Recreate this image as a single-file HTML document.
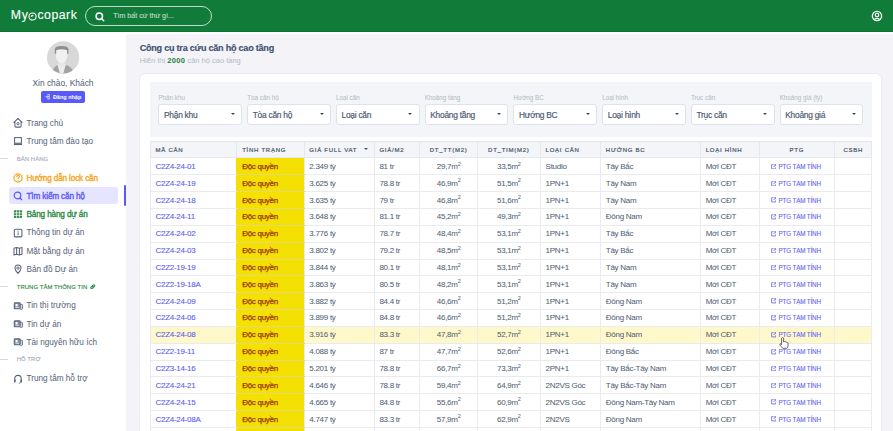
<!DOCTYPE html>
<html><head><meta charset="utf-8">
<style>
*{box-sizing:border-box;margin:0;padding:0}
html,body{width:893px;height:431px;overflow:hidden;background:#fff;font-family:"Liberation Sans",sans-serif;color:#475467}
.abs{position:absolute}
#hdr{position:absolute;left:0;top:0;width:893px;height:32px;background:#117c3a;border-bottom:1px solid #0f7230}
#logo{position:absolute;left:10.8px;top:8.2px;width:70px;height:16px;font-size:12.3px;color:#fff;white-space:nowrap;-webkit-text-stroke:0.1px #fff}
#search{position:absolute;left:85.2px;top:6px;width:127.3px;height:20.2px;border:1.3px solid rgba(255,255,255,0.72);border-radius:10.1px}
#search .ph{position:absolute;left:27px;top:5.3px;font-size:7.1px;color:#c8dccd;white-space:nowrap;-webkit-text-stroke:0.1px #c8dccd}
#side{position:absolute;left:0;top:32px;width:126px;height:399px;background:#fff}
#main{position:absolute;left:126px;top:34px;width:767px;height:397px;background:#f3f3f8}
.nav{position:absolute;left:14px;height:14px;font-size:8.2px;white-space:nowrap;color:#4b5a70;-webkit-text-stroke:0.03px currentColor}
.nav svg{position:absolute;left:-0.9px;top:0.8px}
.nav span{position:absolute;left:12.5px;top:1px}
.sec{position:absolute;left:0;height:8px;font-size:5.9px;letter-spacing:0.1px;color:#aab0bb;white-space:nowrap;-webkit-text-stroke:0.15px currentColor}
.sec i{position:absolute;left:0;top:2.3px;width:8.3px;height:1px;background:#d5d8de}
.sec span{position:absolute;left:16.7px;top:0px}
#card{position:absolute;left:139.2px;top:72.9px;width:742.8px;height:380px;background:#fff;border:0.8px solid #ebebf1;border-radius:6px}
#filt{position:absolute;left:150px;top:82px;width:722px;height:54.5px;background:#f4f5f8}
.fl{position:absolute;top:11.9px;font-size:6.3px;color:#b3b8c2;white-space:nowrap}
.sel{position:absolute;top:22.3px;width:83.8px;height:20.6px;background:#fff;border:1px solid #dfe2e8;border-radius:3px}
.sel span{position:absolute;left:4.6px;top:4.5px;font-size:8.4px;letter-spacing:-0.25px;color:#4b5a72;white-space:nowrap;-webkit-text-stroke:0.18px #4b5a72}
.sel b{position:absolute;right:6.3px;top:8.2px;width:0;height:0;border-left:2.9px solid transparent;border-right:2.9px solid transparent;border-top:2.9px solid #3d4756}
#tbl{position:absolute;left:149.75px;top:140.85px;width:721.8px}
table{border-collapse:collapse;table-layout:fixed;width:721.8px}
th{height:16.6px;background:#f4f5f8;font-size:6px;font-weight:normal;-webkit-text-stroke:0.22px #4b5a70;letter-spacing:0.75px;color:#4b5a70;text-align:left;padding:0 0 0 4.8px;border:0.6px solid #e6e8ed;white-space:nowrap}
td{height:16.85px;font-size:8px;letter-spacing:-0.28px;color:#505e74;padding:0 0 0 4.8px;-webkit-text-stroke:0.04px #505e74;border:0.6px solid #e9ebef;white-space:nowrap;background:#fff}
td.c,th.c{text-align:center;padding:0}
td.id{border-right-color:#f5e004;color:#5d5fef;-webkit-text-stroke:0.1px #5d5fef}
td.st{border-top-color:#e6da6e;border-bottom-color:#e6da6e;background:#f5e004;color:#9a3506;-webkit-text-stroke:0.25px #9a3506}
td.ptg{color:#6366f1;text-align:center;padding:0 2px 0 0;font-size:6.3px;letter-spacing:-0.15px;-webkit-text-stroke:0.1px #6366f1}
tr.hl td{background:#fef8cb}
tr.hl td.st{background:#f5e004}
sup{font-size:5.5px;vertical-align:top;position:relative;top:-1.3px}
</style></head>
<body>
<div id="hdr">
  <div id="logo"><span style="position:absolute;left:0;top:0;letter-spacing:0.6px">My</span><svg style="position:absolute;left:17px;top:3.5px" width="9" height="9" viewBox="0 0 9 9"><circle cx="4.5" cy="4.5" r="3.55" fill="none" stroke="#fff" stroke-width="1.1"/><path d="M2.6 4.9 Q3 2.5 5.6 2.9 Q5 5 2.6 4.9Z" fill="#fff"/></svg><span style="position:absolute;left:26.6px;top:0;letter-spacing:0.5px">copark</span></div>
  <div id="search">
    <svg class="abs" style="left:9px;top:4.6px" width="10" height="10" viewBox="0 0 10 10"><circle cx="4.3" cy="4.3" r="3.2" fill="none" stroke="#fff" stroke-width="1.5"/><line x1="6.7" y1="6.7" x2="8.7" y2="8.7" stroke="#fff" stroke-width="1.5" stroke-linecap="round"/></svg>
    <div class="ph">Tìm bất cứ thứ gì...</div>
  </div>
  <svg class="abs" style="left:871px;top:9.8px" width="12" height="12" viewBox="0 0 12 12"><circle cx="6" cy="6" r="4.6" fill="none" stroke="#fff" stroke-width="1.35"/><circle cx="6" cy="5" r="1.75" fill="none" stroke="#fff" stroke-width="1.2"/><path d="M3.4 9.5 Q6 7.3 8.6 9.5" fill="none" stroke="#fff" stroke-width="1.2"/></svg>
</div>
<div id="side">
<svg class="abs" style="left:44px;top:6px" width="38" height="38" viewBox="0 0 431 431">
<defs><clipPath id="av"><circle cx="217" cy="220" r="183"/></clipPath></defs>
<circle cx="217" cy="220" r="183" fill="#d8d8d8"/>
<g clip-path="url(#av)">
<path d="M80 420 Q90 340 160 300 L200 300 L240 300 Q320 320 350 420 Z" fill="#a3a3a3"/>
<path d="M150 290 L200 300 L250 290 L215 420 L185 420 Z" fill="#ececec"/>
<path d="M170 240 L232 240 L232 300 L200 330 L170 300 Z" fill="#e6e6e6"/>
<path d="M135 130 L265 130 L265 215 Q258 268 200 290 Q142 268 135 215 Z" fill="#f1f1f1"/>
<path d="M123 180 L123 125 Q128 92 200 92 Q272 92 277 125 L277 180 L262 180 L262 138 Q240 128 200 128 Q160 128 138 138 L138 180 Z" fill="#8e8e8e"/>
</g></svg>
<div class="abs" style="left:32.5px;top:46px;font-size:8.4px;color:#56657a;white-space:nowrap;-webkit-text-stroke:0.05px #56657a">Xin chào, Khách</div>
<div class="abs" style="left:41.2px;top:59.3px;width:43.8px;height:11.6px;background:#5859fb;border-radius:2px"><svg class="abs" style="left:3.6px;top:2.9px" width="5.6" height="5.6" viewBox="0 0 10 10"><path d="M4.5 1.2H7.8Q8.8 1.2 8.8 2.2V7.8Q8.8 8.8 7.8 8.8H4.5" fill="none" stroke="#fff" stroke-width="1.5"/><path d="M1 5H6.2M4.2 2.8L6.4 5L4.2 7.2" fill="none" stroke="#fff" stroke-width="1.5"/></svg><span class="abs" style="left:11.7px;top:2.7px;font-size:5.5px;font-weight:bold;color:#fff;white-space:nowrap">Đăng nhập</span></div>
<div class="abs" style="left:9px;top:155.10px;width:108.6px;height:17px;background:#e5e5ff;border-radius:2.5px"></div>
<div class="abs" style="left:124px;top:153.40px;width:2px;height:21px;background:#5859fb;border-radius:1px"></div>
<div class="nav" style="top:85.40px;color:#56657a;"><span style="position:absolute;left:0;top:0"><svg width="10" height="10" viewBox="0 0 10 10"><path d="M0.6 4.7L5 0.5L9.4 4.7M1.9 3.6V8.1Q1.9 9.1 2.9 9.1H7.1Q8.1 9.1 8.1 8.1V3.6" fill="none" stroke="#56657a" stroke-width="1.05" stroke-linejoin="round"/><circle cx="5" cy="5.7" r="1.15" fill="none" stroke="#56657a" stroke-width="0.95"/></svg></span><span style="left:12.5px;top:1.5px;position:absolute">Trang chủ</span></div>
<div class="nav" style="top:103.64px;color:#56657a;"><span style="position:absolute;left:0;top:0"><svg width="10" height="10" viewBox="0 0 10 10"><rect x="1.6" y="1.6" width="6.8" height="5.6" fill="none" stroke="#56657a" stroke-width="1.05"/><path d="M0.9 8.3H9.1" stroke="#56657a" stroke-width="1.5"/></svg></span><span style="left:12.5px;top:1.5px;position:absolute">Trung tâm đào tạo</span></div>
<div class="nav" style="top:140.12px;color:#f5a524;-webkit-text-stroke:0.35px #f5a524;letter-spacing:-0.15px;"><span style="position:absolute;left:0;top:0"><svg width="10" height="10" viewBox="0 0 10 10"><circle cx="5" cy="5" r="4.1" fill="none" stroke="#f5a524" stroke-width="1.25"/><path d="M3.5 4Q3.6 2.4 5.1 2.4Q6.6 2.5 6.5 3.8Q6.4 4.7 5.1 5.2V6" fill="none" stroke="#f5a524" stroke-width="1.1"/><circle cx="5.1" cy="7.4" r="0.65" fill="#f5a524"/></svg></span><span style="left:12.5px;top:1.5px;position:absolute">Hướng dẫn lock căn</span></div>
<div class="nav" style="top:158.36px;color:#5859fb;-webkit-text-stroke:0.35px #5859fb;letter-spacing:-0.15px;"><span style="position:absolute;left:0;top:0"><svg width="10" height="10" viewBox="0 0 10 10"><circle cx="4.5" cy="4.5" r="3.3" fill="none" stroke="#5859fb" stroke-width="1.2"/><path d="M7 7L9 9" stroke="#5859fb" stroke-width="1.2"/></svg></span><span style="left:12.5px;top:1.5px;position:absolute">Tìm kiếm căn hộ</span></div>
<div class="nav" style="top:176.60px;color:#2e8a47;-webkit-text-stroke:0.35px #2e8a47;letter-spacing:-0.15px;"><span style="position:absolute;left:0;top:0"><svg width="10" height="10" viewBox="0 0 10 10"><rect x="0.9" y="1.3" width="8.2" height="7.6" rx="1" fill="#2e8a47"/><path d="M0.9 3.8H9.1M0.9 6.4H9.1M3.6 1.3V8.9M6.4 1.3V8.9" stroke="#fff" stroke-width="0.75"/></svg></span><span style="left:12.5px;top:1.5px;position:absolute">Bảng hàng dự án</span></div>
<div class="nav" style="top:194.84px;color:#56657a;"><span style="position:absolute;left:0;top:0"><svg width="10" height="10" viewBox="0 0 10 10"><rect x="1.3" y="1.3" width="7.6" height="7.6" rx="1.2" fill="none" stroke="#56657a" stroke-width="1.1"/><path d="M5.1 4.4V7.2" stroke="#56657a" stroke-width="1"/><circle cx="5.1" cy="3.1" r="0.6" fill="#56657a"/></svg></span><span style="left:12.5px;top:1.5px;position:absolute">Thông tin dự án</span></div>
<div class="nav" style="top:213.08px;color:#56657a;"><span style="position:absolute;left:0;top:0"><svg width="10" height="10" viewBox="0 0 10 10"><path d="M1 2.2L3.6 1.4L6.4 2.2L9 1.4V8.2L6.4 9L3.6 8.2L1 9Z M3.6 1.4V8.2M6.4 2.2V9" fill="none" stroke="#56657a" stroke-width="1.05" stroke-linejoin="round"/></svg></span><span style="left:12.5px;top:1.5px;position:absolute">Mặt bằng dự án</span></div>
<div class="nav" style="top:231.32px;color:#56657a;"><span style="position:absolute;left:0;top:0"><svg width="10" height="10" viewBox="0 0 10 10"><path d="M5 9.4Q2 6.3 2 4.2Q2 1 5 1Q8 1 8 4.2Q8 6.3 5 9.4Z" fill="none" stroke="#56657a" stroke-width="1.05"/><circle cx="5" cy="4.1" r="1.2" fill="none" stroke="#56657a" stroke-width="0.95"/></svg></span><span style="left:12.5px;top:1.5px;position:absolute">Bản đồ Dự án</span></div>
<div class="nav" style="top:267.80px;color:#56657a;"><span style="position:absolute;left:0;top:0"><svg width="10" height="10" viewBox="0 0 10 10"><rect x="1.3" y="1.9" width="5.9" height="5.9" rx="0.8" fill="#8d98a8" stroke="#56657a" stroke-width="1.1"/><rect x="2.6" y="3" width="1.9" height="2.4" fill="#fff"/><path d="M2.6 6.6H6.2" stroke="#fff" stroke-width="0.6"/><path d="M7.4 3.4H8.9Q9.4 3.4 9.4 3.9V7.7Q9.4 8.3 8.9 8.3H7.2" fill="none" stroke="#56657a" stroke-width="0.9"/><path d="M8.4 4.4V7.4" stroke="#aab2bf" stroke-width="0.6"/></svg></span><span style="left:12.5px;top:1.5px;position:absolute">Tin thị trường</span></div>
<div class="nav" style="top:286.04px;color:#56657a;"><span style="position:absolute;left:0;top:0"><svg width="10" height="10" viewBox="0 0 10 10"><rect x="1.3" y="1.9" width="5.9" height="5.9" rx="0.8" fill="#8d98a8" stroke="#56657a" stroke-width="1.1"/><rect x="2.6" y="3" width="1.9" height="2.4" fill="#fff"/><path d="M2.6 6.6H6.2" stroke="#fff" stroke-width="0.6"/><path d="M7.4 3.4H8.9Q9.4 3.4 9.4 3.9V7.7Q9.4 8.3 8.9 8.3H7.2" fill="none" stroke="#56657a" stroke-width="0.9"/><path d="M8.4 4.4V7.4" stroke="#aab2bf" stroke-width="0.6"/></svg></span><span style="left:12.5px;top:1.5px;position:absolute">Tin dự án</span></div>
<div class="nav" style="top:304.28px;color:#56657a;"><span style="position:absolute;left:0;top:0"><svg width="10" height="10" viewBox="0 0 10 10"><rect x="1.3" y="1.9" width="5.9" height="5.9" rx="0.8" fill="#8d98a8" stroke="#56657a" stroke-width="1.1"/><rect x="2.6" y="3" width="1.9" height="2.4" fill="#fff"/><path d="M2.6 6.6H6.2" stroke="#fff" stroke-width="0.6"/><path d="M7.4 3.4H8.9Q9.4 3.4 9.4 3.9V7.7Q9.4 8.3 8.9 8.3H7.2" fill="none" stroke="#56657a" stroke-width="0.9"/><path d="M8.4 4.4V7.4" stroke="#aab2bf" stroke-width="0.6"/></svg></span><span style="left:12.5px;top:1.5px;position:absolute">Tài nguyên hữu ích</span></div>
<div class="nav" style="top:340.76px;color:#56657a;"><span style="position:absolute;left:0;top:0"><svg width="10" height="10" viewBox="0 0 10 10"><path d="M1.7 7.2V5.2Q1.7 1.4 5 1.4Q8.3 1.4 8.3 5.2V7.2" fill="none" stroke="#56657a" stroke-width="1.1"/><rect x="1" y="5.4" width="1.7" height="3" rx="0.7" fill="#56657a"/><rect x="7.3" y="5.4" width="1.7" height="3" rx="0.7" fill="#56657a"/><path d="M8 8.2Q7.6 9.2 5.8 9.2" fill="none" stroke="#56657a" stroke-width="0.9"/></svg></span><span style="left:12.5px;top:1.5px;position:absolute">Trung tâm hỗ trợ</span></div>
<div class="sec" style="top:123.83px;color:#a7adb9"><i></i><span>BÁN HÀNG</span></div>
<div class="sec" style="top:251.51px;color:#2e8a47"><i></i><span>TRUNG TÂM THÔNG TIN<svg width="5.5" height="5.5" viewBox="0 0 10 10" style="margin-left:2.8px;vertical-align:-0.5px"><g transform="rotate(-45 5 5)" fill="none" stroke="#2e8a47" stroke-width="1.9"><rect x="0.6" y="3.4" width="4.6" height="3.2" rx="1.6"/><rect x="4.8" y="3.4" width="4.6" height="3.2" rx="1.6"/></g></svg></span></div>
<div class="sec" style="top:324.47px;color:#a7adb9"><i></i><span>HỖ TRỢ</span></div>
</div>
<div id="main"></div>
<div class="abs" style="left:139.7px;top:42.8px;font-size:9.1px;letter-spacing:-0.25px;font-weight:bold;color:#3f5170;white-space:nowrap;-webkit-text-stroke:0.15px #3f5170">Công cụ tra cứu căn hộ cao tầng</div>
<div class="abs" style="left:139.7px;top:55.5px;font-size:7.5px;color:#b3b9c4;white-space:nowrap">Hiển thị <b style="color:#1b823c;letter-spacing:0.35px">2000</b> căn hộ cao tầng</div>
<div id="card"></div>
<div id="filt">
<div class="fl" style="left:8.40px">Phân khu</div><div class="sel" style="left:8.40px"><span>Phận khu</span><b></b></div>
<div class="fl" style="left:97.15px">Tòa căn hộ</div><div class="sel" style="left:97.15px"><span>Tòa căn hộ</span><b></b></div>
<div class="fl" style="left:185.90px">Loại căn</div><div class="sel" style="left:185.90px"><span>Loại căn</span><b></b></div>
<div class="fl" style="left:274.65px">Khoảng tầng</div><div class="sel" style="left:274.65px"><span>Khoảng tầng</span><b></b></div>
<div class="fl" style="left:363.40px">Hướng BC</div><div class="sel" style="left:363.40px"><span>Hướng BC</span><b></b></div>
<div class="fl" style="left:452.15px">Loại hình</div><div class="sel" style="left:452.15px"><span>Loại hình</span><b></b></div>
<div class="fl" style="left:540.90px">Trục căn</div><div class="sel" style="left:540.90px"><span>Trục căn</span><b></b></div>
<div class="fl" style="left:629.65px">Khoảng giá (tỷ)</div><div class="sel" style="left:629.65px"><span>Khoảng giá</span><b></b></div>
</div>
<div id="tbl"><table><colgroup>
<col style="width:86.60px">
<col style="width:67.20px">
<col style="width:70.10px">
<col style="width:45.80px">
<col style="width:57.40px">
<col style="width:63.00px">
<col style="width:60.20px">
<col style="width:99.90px">
<col style="width:58.70px">
<col style="width:75.60px">
<col style="width:37.20px">
</colgroup><tr>
<th class="">MÃ CĂN</th>
<th class="">TÌNH TRẠNG</th>
<th style="position:relative">GIÁ FULL VAT<b style="position:absolute;right:6px;top:6.5px;border-left:2.5px solid transparent;border-right:2.5px solid transparent;border-top:2.5px solid #4b5563"></b></th>
<th class="">GIÁ/M2</th>
<th class="c">DT_TT(M2)</th>
<th class="c">DT_TIM(M2)</th>
<th class="">LOẠI CĂN</th>
<th class="">HƯỚNG BC</th>
<th class="">LOẠI HÌNH</th>
<th class="c">PTG</th>
<th class="c">CSBH</th>
</tr>
<tr><td class="id">C2Z4-24-01</td><td class="st">Độc quyền</td><td>2.349 tỷ</td><td>81 tr</td><td class="c">29,7m<sup>2</sup></td><td class="c">33,5m<sup>2</sup></td><td>Studio</td><td>Tây Bắc</td><td>Mới CĐT</td><td class="ptg"><svg width="5.6" height="5.6" viewBox="0 0 10 10" style="vertical-align:-0.4px;margin-right:2px"><path d="M4.5 1.2H1.2V8.8H8.8V5.5" fill="none" stroke="#6366f1" stroke-width="1.5"/><path d="M6 1.2H8.8V4M8.8 1.2L4.6 5.4" fill="none" stroke="#6366f1" stroke-width="1.5"/></svg>PTG TẠM TÍNH</td><td></td></tr>
<tr><td class="id">C2Z4-24-19</td><td class="st">Độc quyền</td><td>3.625 tỷ</td><td>78.8 tr</td><td class="c">46,9m<sup>2</sup></td><td class="c">51,5m<sup>2</sup></td><td>1PN+1</td><td>Tây Nam</td><td>Mới CĐT</td><td class="ptg"><svg width="5.6" height="5.6" viewBox="0 0 10 10" style="vertical-align:-0.4px;margin-right:2px"><path d="M4.5 1.2H1.2V8.8H8.8V5.5" fill="none" stroke="#6366f1" stroke-width="1.5"/><path d="M6 1.2H8.8V4M8.8 1.2L4.6 5.4" fill="none" stroke="#6366f1" stroke-width="1.5"/></svg>PTG TẠM TÍNH</td><td></td></tr>
<tr><td class="id">C2Z4-24-18</td><td class="st">Độc quyền</td><td>3.635 tỷ</td><td>79 tr</td><td class="c">46,8m<sup>2</sup></td><td class="c">51,6m<sup>2</sup></td><td>1PN+1</td><td>Tây Nam</td><td>Mới CĐT</td><td class="ptg"><svg width="5.6" height="5.6" viewBox="0 0 10 10" style="vertical-align:-0.4px;margin-right:2px"><path d="M4.5 1.2H1.2V8.8H8.8V5.5" fill="none" stroke="#6366f1" stroke-width="1.5"/><path d="M6 1.2H8.8V4M8.8 1.2L4.6 5.4" fill="none" stroke="#6366f1" stroke-width="1.5"/></svg>PTG TẠM TÍNH</td><td></td></tr>
<tr><td class="id">C2Z4-24-11</td><td class="st">Độc quyền</td><td>3.648 tỷ</td><td>81.1 tr</td><td class="c">45,2m<sup>2</sup></td><td class="c">49,3m<sup>2</sup></td><td>1PN+1</td><td>Đông Nam</td><td>Mới CĐT</td><td class="ptg"><svg width="5.6" height="5.6" viewBox="0 0 10 10" style="vertical-align:-0.4px;margin-right:2px"><path d="M4.5 1.2H1.2V8.8H8.8V5.5" fill="none" stroke="#6366f1" stroke-width="1.5"/><path d="M6 1.2H8.8V4M8.8 1.2L4.6 5.4" fill="none" stroke="#6366f1" stroke-width="1.5"/></svg>PTG TẠM TÍNH</td><td></td></tr>
<tr><td class="id">C2Z4-24-02</td><td class="st">Độc quyền</td><td>3.776 tỷ</td><td>78.7 tr</td><td class="c">48,4m<sup>2</sup></td><td class="c">53,1m<sup>2</sup></td><td>1PN+1</td><td>Tây Bắc</td><td>Mới CĐT</td><td class="ptg"><svg width="5.6" height="5.6" viewBox="0 0 10 10" style="vertical-align:-0.4px;margin-right:2px"><path d="M4.5 1.2H1.2V8.8H8.8V5.5" fill="none" stroke="#6366f1" stroke-width="1.5"/><path d="M6 1.2H8.8V4M8.8 1.2L4.6 5.4" fill="none" stroke="#6366f1" stroke-width="1.5"/></svg>PTG TẠM TÍNH</td><td></td></tr>
<tr><td class="id">C2Z4-24-03</td><td class="st">Độc quyền</td><td>3.802 tỷ</td><td>79.2 tr</td><td class="c">48,5m<sup>2</sup></td><td class="c">53,1m<sup>2</sup></td><td>1PN+1</td><td>Tây Bắc</td><td>Mới CĐT</td><td class="ptg"><svg width="5.6" height="5.6" viewBox="0 0 10 10" style="vertical-align:-0.4px;margin-right:2px"><path d="M4.5 1.2H1.2V8.8H8.8V5.5" fill="none" stroke="#6366f1" stroke-width="1.5"/><path d="M6 1.2H8.8V4M8.8 1.2L4.6 5.4" fill="none" stroke="#6366f1" stroke-width="1.5"/></svg>PTG TẠM TÍNH</td><td></td></tr>
<tr><td class="id">C2Z2-19-19</td><td class="st">Độc quyền</td><td>3.844 tỷ</td><td>80.1 tr</td><td class="c">48,1m<sup>2</sup></td><td class="c">53,1m<sup>2</sup></td><td>1PN+1</td><td>Tây Nam</td><td>Mới CĐT</td><td class="ptg"><svg width="5.6" height="5.6" viewBox="0 0 10 10" style="vertical-align:-0.4px;margin-right:2px"><path d="M4.5 1.2H1.2V8.8H8.8V5.5" fill="none" stroke="#6366f1" stroke-width="1.5"/><path d="M6 1.2H8.8V4M8.8 1.2L4.6 5.4" fill="none" stroke="#6366f1" stroke-width="1.5"/></svg>PTG TẠM TÍNH</td><td></td></tr>
<tr><td class="id">C2Z2-19-18A</td><td class="st">Độc quyền</td><td>3.863 tỷ</td><td>80.5 tr</td><td class="c">48,2m<sup>2</sup></td><td class="c">53,1m<sup>2</sup></td><td>1PN+1</td><td>Tây Nam</td><td>Mới CĐT</td><td class="ptg"><svg width="5.6" height="5.6" viewBox="0 0 10 10" style="vertical-align:-0.4px;margin-right:2px"><path d="M4.5 1.2H1.2V8.8H8.8V5.5" fill="none" stroke="#6366f1" stroke-width="1.5"/><path d="M6 1.2H8.8V4M8.8 1.2L4.6 5.4" fill="none" stroke="#6366f1" stroke-width="1.5"/></svg>PTG TẠM TÍNH</td><td></td></tr>
<tr><td class="id">C2Z4-24-09</td><td class="st">Độc quyền</td><td>3.882 tỷ</td><td>84.4 tr</td><td class="c">46,6m<sup>2</sup></td><td class="c">51,2m<sup>2</sup></td><td>1PN+1</td><td>Đông Nam</td><td>Mới CĐT</td><td class="ptg"><svg width="5.6" height="5.6" viewBox="0 0 10 10" style="vertical-align:-0.4px;margin-right:2px"><path d="M4.5 1.2H1.2V8.8H8.8V5.5" fill="none" stroke="#6366f1" stroke-width="1.5"/><path d="M6 1.2H8.8V4M8.8 1.2L4.6 5.4" fill="none" stroke="#6366f1" stroke-width="1.5"/></svg>PTG TẠM TÍNH</td><td></td></tr>
<tr><td class="id">C2Z4-24-06</td><td class="st">Độc quyền</td><td>3.899 tỷ</td><td>84.8 tr</td><td class="c">46,6m<sup>2</sup></td><td class="c">51,2m<sup>2</sup></td><td>1PN+1</td><td>Đông Nam</td><td>Mới CĐT</td><td class="ptg"><svg width="5.6" height="5.6" viewBox="0 0 10 10" style="vertical-align:-0.4px;margin-right:2px"><path d="M4.5 1.2H1.2V8.8H8.8V5.5" fill="none" stroke="#6366f1" stroke-width="1.5"/><path d="M6 1.2H8.8V4M8.8 1.2L4.6 5.4" fill="none" stroke="#6366f1" stroke-width="1.5"/></svg>PTG TẠM TÍNH</td><td></td></tr>
<tr class="hl"><td class="id">C2Z4-24-08</td><td class="st">Độc quyền</td><td>3.916 tỷ</td><td>83.3 tr</td><td class="c">47,8m<sup>2</sup></td><td class="c">52,7m<sup>2</sup></td><td>1PN+1</td><td>Đông Nam</td><td>Mới CĐT</td><td class="ptg"><svg width="5.6" height="5.6" viewBox="0 0 10 10" style="vertical-align:-0.4px;margin-right:2px"><path d="M4.5 1.2H1.2V8.8H8.8V5.5" fill="none" stroke="#6366f1" stroke-width="1.5"/><path d="M6 1.2H8.8V4M8.8 1.2L4.6 5.4" fill="none" stroke="#6366f1" stroke-width="1.5"/></svg>PTG TẠM TÍNH</td><td></td></tr>
<tr><td class="id">C2Z2-19-11</td><td class="st">Độc quyền</td><td>4.088 tỷ</td><td>87 tr</td><td class="c">47,7m<sup>2</sup></td><td class="c">52,6m<sup>2</sup></td><td>1PN+1</td><td>Đông Bắc</td><td>Mới CĐT</td><td class="ptg"><svg width="5.6" height="5.6" viewBox="0 0 10 10" style="vertical-align:-0.4px;margin-right:2px"><path d="M4.5 1.2H1.2V8.8H8.8V5.5" fill="none" stroke="#6366f1" stroke-width="1.5"/><path d="M6 1.2H8.8V4M8.8 1.2L4.6 5.4" fill="none" stroke="#6366f1" stroke-width="1.5"/></svg>PTG TẠM TÍNH</td><td></td></tr>
<tr><td class="id">C2Z3-14-16</td><td class="st">Độc quyền</td><td>5.201 tỷ</td><td>78.8 tr</td><td class="c">66,7m<sup>2</sup></td><td class="c">73,3m<sup>2</sup></td><td>2PN+1</td><td>Tây Bắc-Tây Nam</td><td>Mới CĐT</td><td class="ptg"><svg width="5.6" height="5.6" viewBox="0 0 10 10" style="vertical-align:-0.4px;margin-right:2px"><path d="M4.5 1.2H1.2V8.8H8.8V5.5" fill="none" stroke="#6366f1" stroke-width="1.5"/><path d="M6 1.2H8.8V4M8.8 1.2L4.6 5.4" fill="none" stroke="#6366f1" stroke-width="1.5"/></svg>PTG TẠM TÍNH</td><td></td></tr>
<tr><td class="id">C2Z4-24-21</td><td class="st">Độc quyền</td><td>4.646 tỷ</td><td>78.8 tr</td><td class="c">59,4m<sup>2</sup></td><td class="c">64,9m<sup>2</sup></td><td>2N2VS Góc</td><td>Tây Bắc-Tây Nam</td><td>Mới CĐT</td><td class="ptg"><svg width="5.6" height="5.6" viewBox="0 0 10 10" style="vertical-align:-0.4px;margin-right:2px"><path d="M4.5 1.2H1.2V8.8H8.8V5.5" fill="none" stroke="#6366f1" stroke-width="1.5"/><path d="M6 1.2H8.8V4M8.8 1.2L4.6 5.4" fill="none" stroke="#6366f1" stroke-width="1.5"/></svg>PTG TẠM TÍNH</td><td></td></tr>
<tr><td class="id">C2Z4-24-15</td><td class="st">Độc quyền</td><td>4.665 tỷ</td><td>84.8 tr</td><td class="c">55,6m<sup>2</sup></td><td class="c">60,9m<sup>2</sup></td><td>2N2VS Góc</td><td>Đông Nam-Tây Nam</td><td>Mới CĐT</td><td class="ptg"><svg width="5.6" height="5.6" viewBox="0 0 10 10" style="vertical-align:-0.4px;margin-right:2px"><path d="M4.5 1.2H1.2V8.8H8.8V5.5" fill="none" stroke="#6366f1" stroke-width="1.5"/><path d="M6 1.2H8.8V4M8.8 1.2L4.6 5.4" fill="none" stroke="#6366f1" stroke-width="1.5"/></svg>PTG TẠM TÍNH</td><td></td></tr>
<tr><td class="id">C2Z4-24-08A</td><td class="st">Độc quyền</td><td>4.747 tỷ</td><td>83.3 tr</td><td class="c">57,9m<sup>2</sup></td><td class="c">62,9m<sup>2</sup></td><td>2N2VS</td><td>Đông Nam</td><td>Mới CĐT</td><td class="ptg"><svg width="5.6" height="5.6" viewBox="0 0 10 10" style="vertical-align:-0.4px;margin-right:2px"><path d="M4.5 1.2H1.2V8.8H8.8V5.5" fill="none" stroke="#6366f1" stroke-width="1.5"/><path d="M6 1.2H8.8V4M8.8 1.2L4.6 5.4" fill="none" stroke="#6366f1" stroke-width="1.5"/></svg>PTG TẠM TÍNH</td><td></td></tr>
<tr><td class="id">C2Z4-24-07</td><td class="st">Độc quyền</td><td>4.752 tỷ</td><td>84.1 tr</td><td class="c">56,5m<sup>2</sup></td><td class="c">61,8m<sup>2</sup></td><td>2N2VS</td><td>Đông Nam</td><td>Mới CĐT</td><td class="ptg"><svg width="5.6" height="5.6" viewBox="0 0 10 10" style="vertical-align:-0.4px;margin-right:2px"><path d="M4.5 1.2H1.2V8.8H8.8V5.5" fill="none" stroke="#6366f1" stroke-width="1.5"/><path d="M6 1.2H8.8V4M8.8 1.2L4.6 5.4" fill="none" stroke="#6366f1" stroke-width="1.5"/></svg>PTG TẠM TÍNH</td><td></td></tr>
</table></div>
<svg class="abs" style="left:778.6px;top:337px" width="10" height="12" viewBox="0 0 10 12"><path d="M2.6 1.2 Q3.6 0 4.6 1.2 V4.9 Q5.4 4.1 6.2 4.9 Q7 4.4 7.6 5.3 Q8.5 5 9 6 V8.8 Q9 10.3 8 11.3 H3.8 Q2.5 10 0.9 8 Q0.5 7 1.3 6.8 Q2 6.7 2.6 7.6 Z" fill="#fff" stroke="#333" stroke-width="0.75"/></svg>
</body></html>
